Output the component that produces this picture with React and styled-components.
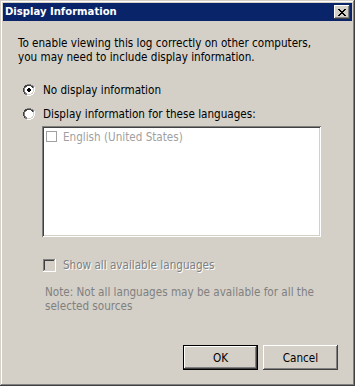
import React from 'react';
import styled, { createGlobalStyle } from 'styled-components';

const GlobalStyle = createGlobalStyle`
  html, body {
    margin: 0;
    padding: 0;
    background: #d4d0c8;
  }
  body {
    font-family: "DejaVu Sans Condensed", "DejaVu Sans", sans-serif;
    font-size: 11.6px;
    color: #000000;
  }
`;

const Window = styled.div`
  box-sizing: border-box;
  width: 355px;
  height: 386px;
  padding: 3px;
  background: #d4d0c8;
  display: flex;
  flex-direction: column;
  box-shadow:
    inset -1px -1px #404040,
    inset 1px 1px #d4d0c8,
    inset -2px -2px #808080,
    inset 2px 2px #ffffff;
`;

const TitleBar = styled.div`
  height: 18px;
  background: #0a246a;
  display: flex;
  align-items: center;
  justify-content: space-between;
  padding: 0 2px 0 2px;
`;

const Title = styled.span`
  color: #ffffff;
  font-weight: bold;
  font-size: 11.2px;
  line-height: 18px;
`;

const CloseButton = styled.div`
  box-sizing: border-box;
  width: 16px;
  height: 14px;
  background: #d4d0c8;
  display: flex;
  align-items: center;
  justify-content: center;
  box-shadow:
    inset -1px -1px #404040,
    inset 1px 1px #ffffff,
    inset -2px -2px #808080,
    inset 2px 2px #d4d0c8;
`;

const Body = styled.div`
  flex: 1;
  display: flex;
  flex-direction: column;
  padding: 15px 14px 13px 15px;
`;

const Text = styled.p`
  margin: 0;
  line-height: 14px;
  color: ${(p) => (p.muted ? '#808080' : '#000000')};
`;

const Choice = styled.label`
  display: flex;
  align-items: center;
  height: 16px;
  margin-top: ${(p) => p.gap}px;
  padding-left: ${(p) => p.indent}px;
  gap: ${(p) => p.space}px;
  color: ${(p) => (p.disabled ? '#808080' : '#000000')};
  text-shadow: ${(p) => (p.disabled ? '1px 1px #ffffff' : 'none')};
`;

const ListBox = styled.div`
  box-sizing: border-box;
  margin: 4px 0 0 24px;
  width: 279px;
  height: 111px;
  background: #ffffff;
  padding: 5px 4px;
  box-shadow:
    inset 1px 1px #808080,
    inset -1px -1px #ffffff,
    inset 2px 2px #404040,
    inset -2px -2px #d4d0c8;
`;

const ListItem = styled.div`
  display: flex;
  align-items: center;
  gap: 6px;
  height: 11px;
  color: #a0a0a0;
`;

const FlatBox = styled.span`
  box-sizing: border-box;
  width: 11px;
  height: 11px;
  border: 1px solid #a0a0a0;
  background: #ffffff;
`;

const Note = styled(Text)`
  margin: 12px 0 0 27px;
`;

const Buttons = styled.div`
  margin-top: auto;
  display: flex;
  justify-content: flex-end;
  gap: 5px;
`;

const Button = styled.button`
  box-sizing: border-box;
  width: 75px;
  height: 25px;
  padding: 0;
  border: ${(p) => (p.primary ? '1px solid #000000' : 'none')};
  background: #d4d0c8;
  font-family: inherit;
  font-size: 11.6px;
  color: #000000;
  box-shadow:
    inset -1px -1px #404040,
    inset 1px 1px #ffffff,
    inset -2px -2px #808080,
    inset 2px 2px #d4d0c8;
`;

const Radio = ({ checked }) => (
  <svg width="12" height="12" viewBox="0 0 12 12" shapeRendering="crispEdges">
    <path d="M4 0h4v1h2v1h1v2h1v4h-1v2h-1v1h-2v1h-4v-1h-2v-1h-1v-2h-1v-4h1v-2h1v-1h2z" fill="#808080" />
    <path d="M4 1h4v1h2v2h-1v-1h-1v-1h-4v1h-2v1h-1v4h1v2h-1v-2h-1v-4h1v-2h1v-1h2z" fill="#404040" />
    <path d="M10 4h1v4h-1v2h-2v1h-4v-1h4v-1h1v-1h1v-4z" fill="#d4d0c8" />
    <path d="M11 3h1v5h-1v2h-1v1h-2v1h-4v-1h4v-1h2v-2h1z" fill="#ffffff" />
    <path d="M4 2h4v1h1v1h1v4h-1v1h-1v1h-4v-1h-1v-1h-1v-4h1v-1h1z" fill="#ffffff" />
    {checked && <path d="M5 4h2v1h1v2h-1v1h-2v-1h-1v-2h1z" fill="#000000" />}
  </svg>
);

const CheckBox = ({ disabled }) => (
  <svg width="13" height="13" viewBox="0 0 13 13" shapeRendering="crispEdges">
    <rect x="0" y="0" width="13" height="13" fill="#ffffff" />
    <path d="M0 0h12v1h-11v11h-1z" fill="#808080" />
    <path d="M1 1h10v1h-9v9h-1z" fill="#404040" />
    <path d="M11 1h1v11h-11v-1h10z" fill="#d4d0c8" />
    <rect x="2" y="2" width="9" height="9" fill={disabled ? '#d4d0c8' : '#ffffff'} />
  </svg>
);

const CloseGlyph = () => (
  <svg width="8" height="7" viewBox="0 0 8 7" shapeRendering="crispEdges">
    <path
      d="M0 0h2v1h1v1h2v-1h1v-1h2v1h-1v1h-1v1h-1v1h1v1h1v1h1v1h-2v-1h-1v-1h-2v1h-1v1h-2v-1h1v-1h1v-1h1v-1h-1v-1h-1v-1h-1z"
      fill="#000000"
    />
  </svg>
);

export default function App() {
  return (
    <>
      <GlobalStyle />
      <Window>
        <TitleBar>
          <Title>Display Information</Title>
          <CloseButton>
            <CloseGlyph />
          </CloseButton>
        </TitleBar>
        <Body>
          <Text>
            To enable viewing this log correctly on other computers,
            <br />
            you may need to include display information.
          </Text>
          <Choice gap={18} indent={5} space={8}>
            <Radio checked />
            No display information
          </Choice>
          <Choice gap={8} indent={5} space={8}>
            <Radio />
            Display information for these languages:
          </Choice>
          <ListBox>
            <ListItem>
              <FlatBox />
              English (United States)
            </ListItem>
          </ListBox>
          <Choice gap={20} indent={25} space={7} disabled>
            <CheckBox disabled />
            Show all available languages
          </Choice>
          <Note muted>
            Note: Not all languages may be available for all the
            <br />
            selected sources
          </Note>
          <Buttons>
            <Button primary>OK</Button>
            <Button>Cancel</Button>
          </Buttons>
        </Body>
      </Window>
    </>
  );
}
